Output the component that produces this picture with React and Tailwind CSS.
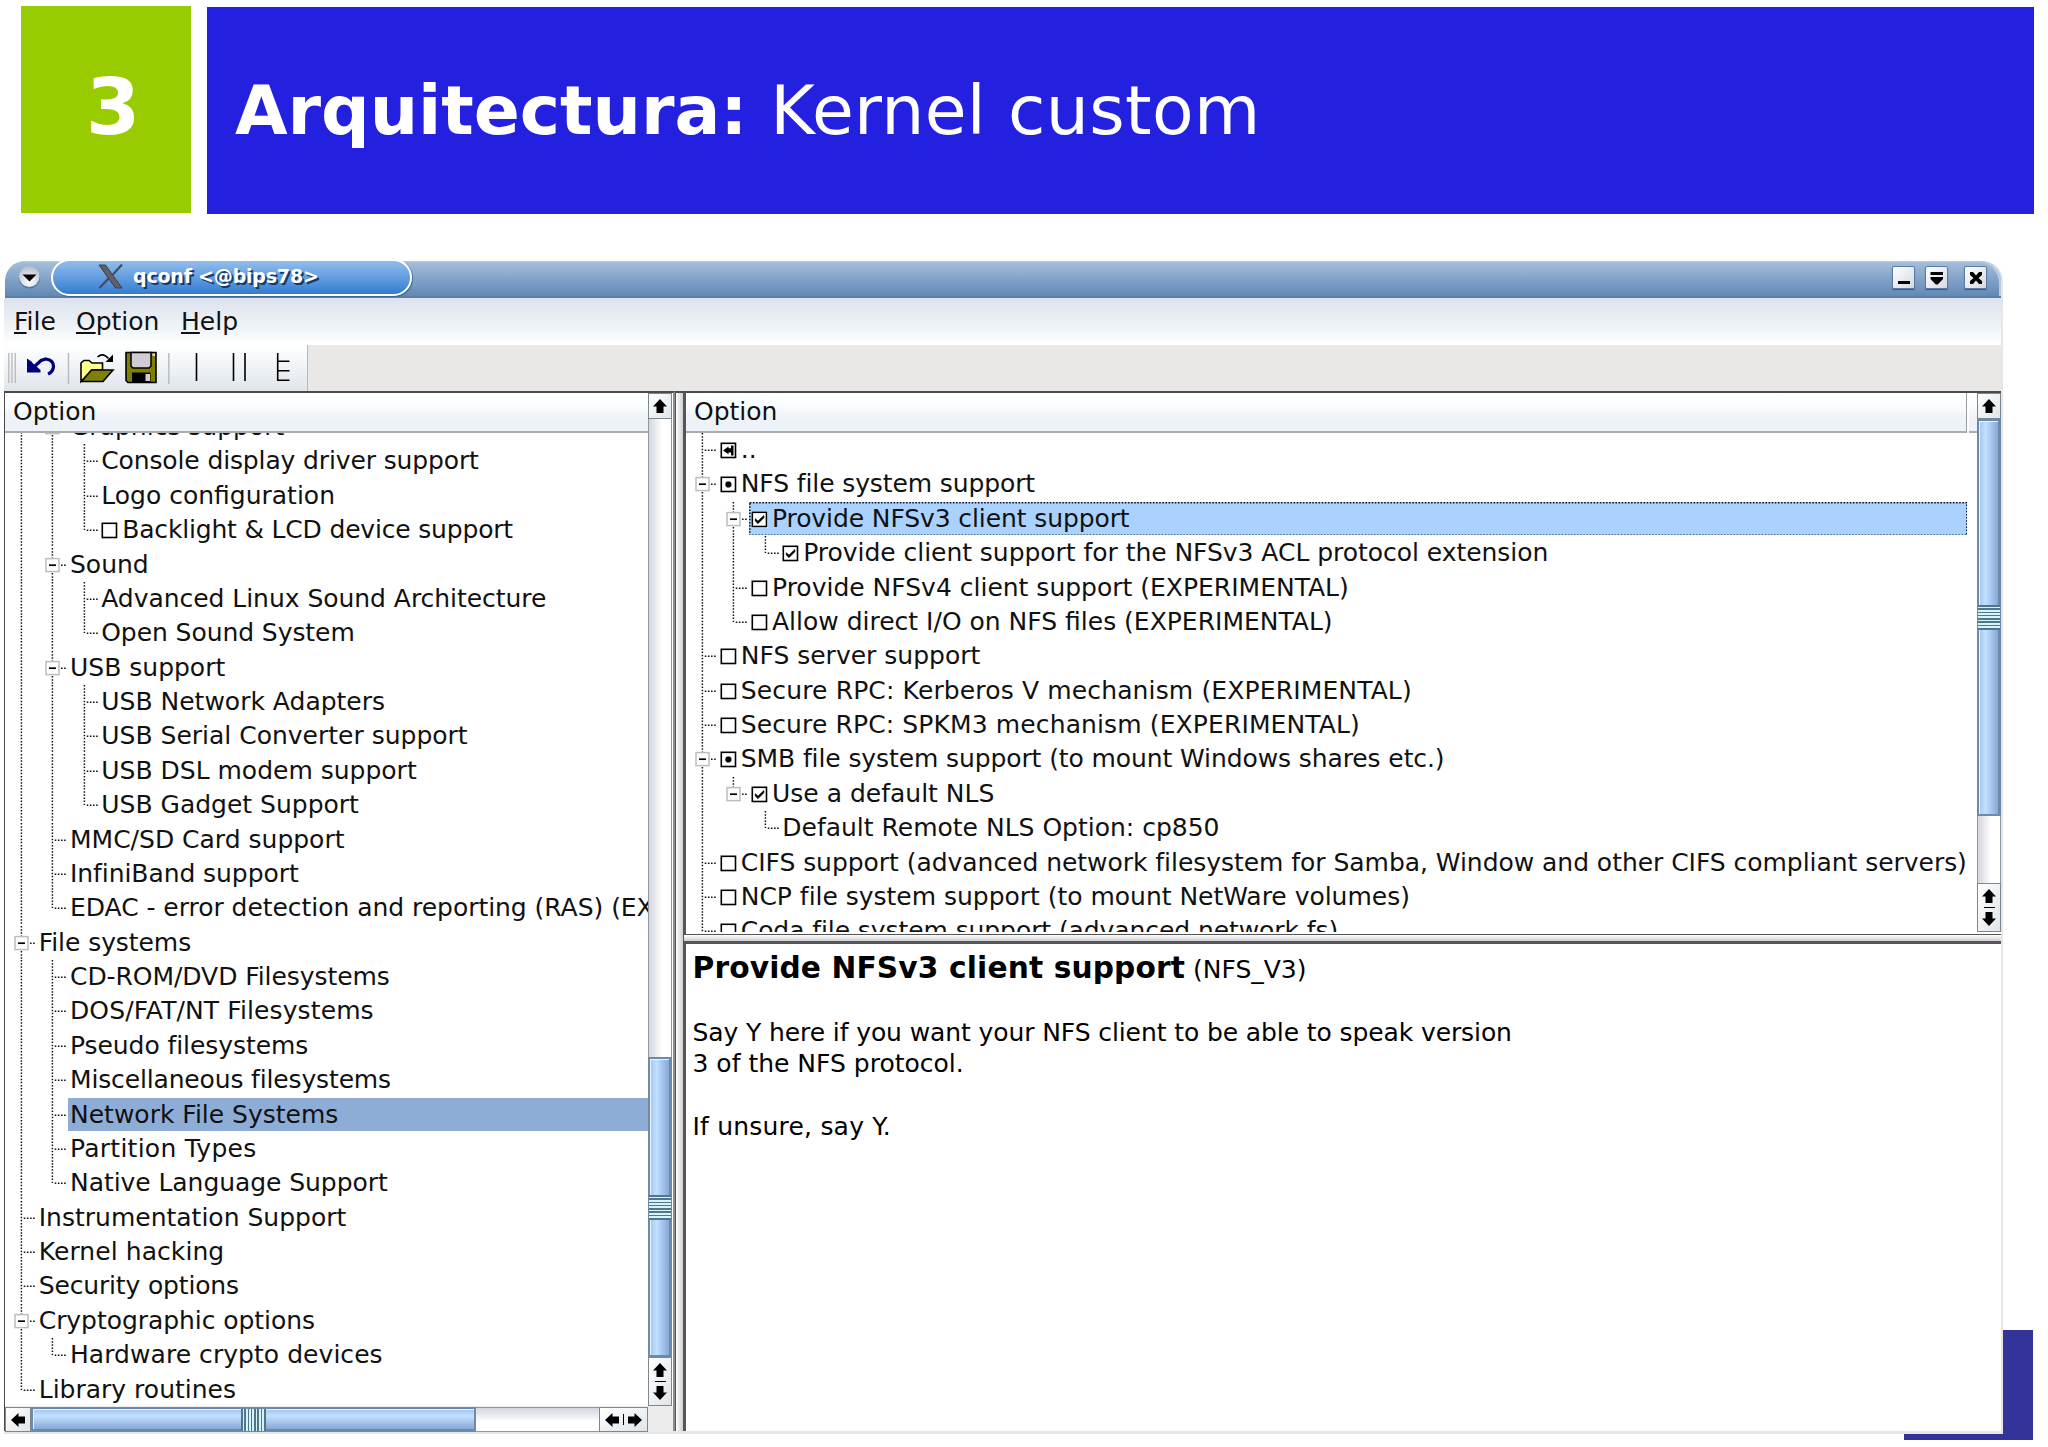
const MENU_ROWS = [
  { guides: "|+", label: "Graphics support" },
  { guides: "||t", label: "Console display driver support", fit: "tracking-[-0.13px]" },
  { guides: "||t", label: "Logo configuration" },
  { guides: "||l", label: "Backlight & LCD device support", box: "empty", fit: "tracking-[-0.18px]" },
  { guides: "|+", label: "Sound" },
  { guides: "||t", label: "Advanced Linux Sound Architecture", fit: "tracking-[-0.04px]" },
  { guides: "||l", label: "Open Sound System", fit: "tracking-[-0.07px]" },
  { guides: "|+", label: "USB support" },
  { guides: "||t", label: "USB Network Adapters" },
  { guides: "||t", label: "USB Serial Converter support" },
  { guides: "||t", label: "USB DSL modem support" },
  { guides: "||l", label: "USB Gadget Support" },
  { guides: "|t", label: "MMC/SD Card support" },
  { guides: "|t", label: "InfiniBand support", fit: "tracking-[-0.07px]" },
  { guides: "|l", label: "EDAC - error detection and reporting (RAS) (EXPERIMENTAL)", fit: "tracking-[-0.04px]" },
  { guides: "+", label: "File systems", fit: "tracking-[-0.07px]" },
  { guides: "|t", label: "CD-ROM/DVD Filesystems", fit: "tracking-[-0.06px]" },
  { guides: "|t", label: "DOS/FAT/NT Filesystems", fit: "tracking-[0.11px]" },
  { guides: "|t", label: "Pseudo filesystems", fit: "tracking-[-0.07px]" },
  { guides: "|t", label: "Miscellaneous filesystems", fit: "tracking-[-0.15px]" },
  { guides: "|t", label: "Network File Systems", state: "selected" },
  { guides: "|t", label: "Partition Types", fit: "tracking-[0.26px]" },
  { guides: "|l", label: "Native Language Support", fit: "tracking-[-0.06px]" },
  { guides: "t", label: "Instrumentation Support" },
  { guides: "t", label: "Kernel hacking", fit: "tracking-[0.07px]" },
  { guides: "t", label: "Security options", fit: "tracking-[-0.16px]" },
  { guides: "+", label: "Cryptographic options", fit: "tracking-[-0.06px]" },
  { guides: "|l", label: "Hardware crypto devices", fit: "tracking-[0.05px]" },
  { guides: "l", label: "Library routines" },
]

const CONFIG_ROWS = [
  { guides: "t", label: "..", box: "back" },
  { guides: "+", label: "NFS file system support", box: "module", fit: "tracking-[-0.11px]" },
  { guides: "|+", label: "Provide NFSv3 client support", box: "checked", state: "focused", fit: "tracking-[-0.1px]" },
  { guides: "||l", label: "Provide client support for the NFSv3 ACL protocol extension", box: "checked", fit: "tracking-[-0.04px]" },
  { guides: "|t", label: "Provide NFSv4 client support (EXPERIMENTAL)", box: "empty" },
  { guides: "|l", label: "Allow direct I/O on NFS files (EXPERIMENTAL)", box: "empty" },
  { guides: "t", label: "NFS server support", box: "empty" },
  { guides: "t", label: "Secure RPC: Kerberos V mechanism (EXPERIMENTAL)", box: "empty", fit: "tracking-[0.14px]" },
  { guides: "t", label: "Secure RPC: SPKM3 mechanism (EXPERIMENTAL)", box: "empty", fit: "tracking-[0.12px]" },
  { guides: "+", label: "SMB file system support (to mount Windows shares etc.)", box: "module", fit: "tracking-[-0.1px]" },
  { guides: "|-", label: "Use a default NLS", box: "checked" },
  { guides: "| l", label: "Default Remote NLS Option: cp850" },
  { guides: "t", label: "CIFS support (advanced network filesystem for Samba, Window and other CIFS compliant servers)", box: "empty", fit: "tracking-[-0.04px]" },
  { guides: "t", label: "NCP file system support (to mount NetWare volumes)", box: "empty", fit: "tracking-[-0.02px]" },
  { guides: "t", label: "Coda file system support (advanced network fs)", box: "empty", fit: "tracking-[-0.08px]" },
]

// | line, t branch, l last branch, + expander with siblings below, - last expander
function Guide({ kind }) {
  const expander = kind === "+" || kind === "-"
  const branch = expander || kind === "t" || kind === "l"
  const dots = { stroke: "#111", strokeWidth: 1.5, strokeDasharray: "1.5625 1.5625" }
  return (
    <svg width="31.25" height="34.375" viewBox="0 0 31.25 34.375" className="shrink-0">
      {kind !== " " && <path d={expander ? "M16.4 0V10" : kind === "l" ? "M16.4 0V17" : "M16.4 0V34.375"} {...dots} />}
      {kind === "+" && <path d="M16.4 25V34.375" {...dots} />}
      {branch && <path d={expander ? "M25 17.2H30" : "M18.75 17.2H30"} {...dots} />}
      {expander && (
        <>
          <rect x="10" y="10.6" width="13" height="13" fill="#fff" stroke="#bdbdbd" strokeWidth="1.5" />
          <path d="M13 17.2H20" stroke="#000" strokeWidth="1.7" />
        </>
      )}
    </svg>
  )
}

function Box({ kind }) {
  return (
    <svg width="17" height="17" viewBox="0 0 17 17" className="mt-[9px] mr-[4px] ml-[2.5px] shrink-0 bg-white">
      <rect x="1.3" y="1.3" width="14.2" height="14.2" fill="#fff" stroke="#000" strokeWidth="1.6" />
      {kind === "checked" && <path d="M4.3 7.8V10L7 12.6L12.8 6.8V4.6L7 10.2Z" fill="#000" stroke="#000" strokeWidth="0.8" />}
      {kind === "module" && <path d="M7 5.4H9.8L11.4 7V9.8L9.8 11.4H7L5.4 9.8V7Z" fill="#000" />}
      {kind === "back" && <path d="M3 8.4L8.5 4.6V6.2H11V3.4H13.5V13.4H11V10.6H8.5V12.2Z" fill="#000" />}
    </svg>
  )
}

const ROW_STATE = {
  selected: "bg-[#8eadd6]",
  focused: "bg-[#aad2ff]",
}

// dotted keyboard focus rectangle round the current row
function FocusFrame() {
  return (
    <svg width="100%" height="100%" className="absolute inset-0">
      <rect x="0.8" y="0.8" width="1217" height="32.4" fill="none" stroke="#112" strokeWidth="1.6" strokeDasharray="1.5625 1.5625" />
    </svg>
  )
}

function Tree({ rows, className = "" }) {
  return (
    <div className={className}>
      {rows.map((row) => (
        <div key={row.label} className="flex h-[34.375px]">
          {[...row.guides].map((kind, i) => (
            <Guide key={i} kind={kind} />
          ))}
          <div className={`relative flex h-[33.7px] min-w-0 flex-1 ${ROW_STATE[row.state] || ""}`}>
            {row.state === "focused" && <FocusFrame />}
            {row.box && <Box kind={row.box} />}
            <span className={`whitespace-pre leading-[33px] ${row.fit || ""} ${row.box ? "" : "pl-[2.5px]"}`}>{row.label}</span>
          </div>
        </div>
      ))}
    </div>
  )
}

function ColumnHeader({ children }) {
  return (
    <div className="flex h-[40px] shrink-0 border-b-2 border-[#a9adb1] bg-linear-to-b from-[#eef5f8] via-[#dfe8ef] via-60% to-[#eff3fa]">
      <div className="flex flex-1 bg-linear-to-b from-white via-[#fbfdfe] via-30% to-transparent pl-[8px] leading-[38px]">
        {children}
      </div>
    </div>
  )
}

const ARROWS = {
  up: "M7 0L14 7.5H10.5V14H3.5V7.5H0Z",
  down: "M7 14L14 6.5H10.5V0H3.5V6.5H0Z",
  left: "M0 7L7.5 0V3.5H14V10.5H7.5V14Z",
  right: "M14 7L6.5 0V3.5H0V10.5H6.5V14Z",
}

function Arrow({ dir }) {
  return (
    <svg width="14" height="14" viewBox="0 0 14 14">
      <path d={ARROWS[dir]} fill="#000" />
    </svg>
  )
}

const BUTTON = "flex shrink-0 items-center justify-center border-[1.5px] border-[#7c8790] bg-linear-to-br from-white to-[#dfe5ea]"

function VScroll({ before, thumb, after }) {
  return (
    <div className="flex w-[24px] shrink-0 flex-col">
      <div className={`${BUTTON} h-[26px]`}>
        <Arrow dir="up" />
      </div>
      <div className={`${before} border-x border-[#8f99a5] bg-linear-to-r from-[#d3d6df] to-white to-60%`} />
      <div
        className={`${thumb} flex shrink-0 flex-col justify-center border-2 border-r-[3px] border-[#6f8aa8] bg-linear-to-r from-[#a3c6ee] via-[#c3e0ff] via-35% to-[#86a8d8] shadow-[inset_1px_1px_0_#e6f4ff]`}
      >
        <div className="-mr-[2px] -ml-px h-[25px] bg-[repeating-linear-gradient(to_bottom,#4f7689_0_1.6px,#d8f2fb_1.6px_3.3px)]" />
      </div>
      <div className={`${after} border-x border-[#8f99a5] bg-linear-to-r from-[#d3d6df] to-white to-60%`} />
      <div className={`${BUTTON} h-[49px] flex-col gap-[4px]`}>
        <Arrow dir="up" />
        <div className="h-[1.6px] w-[11px] bg-black" />
        <Arrow dir="down" />
      </div>
    </div>
  )
}

function HScroll() {
  return (
    <div className="flex h-[25px] w-[643px] shrink-0">
      <div className={`${BUTTON} w-[26px]`}>
        <Arrow dir="left" />
      </div>
      <div className="flex w-[445px] shrink-0 justify-center border-2 border-b-[3px] border-[#6f8aa8] bg-linear-to-b from-[#a3c6ee] via-[#c3e0ff] via-35% to-[#86a8d8] shadow-[inset_1px_1px_0_#e6f4ff]">
        <div className="-mb-[2px] w-[25px] bg-[repeating-linear-gradient(to_right,#4f7689_0_1.6px,#d8f2fb_1.6px_3.3px)]" />
      </div>
      <div className="flex-1 border-y border-[#8f99a5] bg-linear-to-b from-[#d3d6df] to-white to-60%" />
      <div className={`${BUTTON} w-[49px] gap-[4px]`}>
        <Arrow dir="left" />
        <div className="h-[11px] w-[1.6px] bg-black" />
        <Arrow dir="right" />
      </div>
    </div>
  )
}

function WindowButton({ children }) {
  return (
    <div className="h-[23px] w-[23px] rounded-[2px] border border-[#5c7ba6] bg-linear-to-br from-white to-[#d4d9e2] shadow-[0_1px_1px_#2f5a8c]">
      <svg width="21" height="21" viewBox="0 0 21 21">
        {children}
      </svg>
    </div>
  )
}

function TitleBar() {
  return (
    <div className="ml-px flex h-[37px] shrink-0 items-start rounded-tl-[20px] rounded-tr-[20px] border-b-2 border-[#5d7da5] bg-linear-to-b from-[#a6bfdc] to-[#6189b6] pl-[14px] shadow-[inset_-3px_2px_0_-1px_#b9cce2]">
      <svg width="22" height="24" viewBox="0 0 22 24" className="mt-[4px] shrink-0">
        <defs>
          <radialGradient id="orb" cx="0.5" cy="0.75" r="0.7">
            <stop offset="0" stopColor="#fff" />
            <stop offset="1" stopColor="#b9c2ce" />
          </radialGradient>
        </defs>
        <circle cx="10.5" cy="13" r="10.5" fill="#4f77a6" />
        <circle cx="10.3" cy="11.6" r="10.3" fill="url(#orb)" />
        <path d="M3.5 9.5H17.5L10.5 16.5Z" fill="#000" />
      </svg>
      <div className="ml-[10px] flex h-[36px] w-[362px] overflow-hidden">
        <div className="-mt-[2px] flex h-[37px] w-[361px] rounded-full border-[2.5px] border-white bg-linear-to-b from-[#92bdec] to-[#2f7cd2] pl-[45px] shadow-[1px_1px_1px_#3a628f]">
          <svg width="26" height="25" viewBox="0 0 26 25" className="mt-[3px]">
            <path d="M1 1H7.5L24 24H17.5Z" fill="#5d6166" stroke="#3c4046" />
            <path d="M24 0.5L14.5 11M11 14L1.5 24" stroke="#4a4e54" strokeWidth="2.2" />
          </svg>
          <span className="ml-[9px] text-[19px] leading-[31px] font-bold tracking-[-0.2px] text-white [text-shadow:2px_2px_0_#163a66]">
            {"qconf <@bips78>"}
          </span>
        </div>
      </div>
      <div className="flex-1" />
      <div className="mt-[5px] mr-[14px] flex">
        <WindowButton>
          <path d="M5 15.5H17" stroke="#000" strokeWidth="3" />
        </WindowButton>
        <div className="w-[10px]" />
        <WindowButton>
          <path d="M4.5 5H17V8H4.5Z M4.5 10H17V12L11.7 17.5H9.8L4.5 12Z" fill="#000" />
        </WindowButton>
        <div className="w-[16px]" />
        <WindowButton>
          <path d="M5 5H8L11 8.5L14 5H17V8L13.5 11L17 14V17H14L11 13.5L8 17H5V14L8.5 11L5 8Z" fill="#000" />
        </WindowButton>
      </div>
    </div>
  )
}

function MenuItem({ label, className }) {
  return (
    <span className={className}>
      <span className="underline decoration-[1.6px] underline-offset-[2px]">{label[0]}</span>
      {label.slice(1)}
    </span>
  )
}

function ToolBar() {
  return (
    <div className="flex h-[46px] shrink-0 bg-[#e9e8e7]">
      <div className="flex w-[304px] border-r-[1.5px] border-[#b5b7ba] bg-linear-to-b from-white via-[#f3f6f8] via-40% to-[#dfe5ea]">
        <svg width="302" height="46" viewBox="4 345 302 46">
          <path d="M8.8 353V383M12 353V383M15.3 353V383" stroke="#b9bcc0" strokeWidth="1.4" />
          <path d="M68.5 353V384M168.8 353V384" stroke="#b9bcc0" strokeWidth="1.5" />
          {/* undo */}
          <path d="M27 358.5L31.5 361.5L33 363.5L36 366L40.5 370V372.5H27Z" fill="#00007c" />
          <path d="M34 367L41 360.5L46 359Q53.5 360 53.5 366.5Q53 372 48 374" fill="none" stroke="#00007c" strokeWidth="3.2" />
          {/* open */}
          <path d="M81 381.5V363L84 360.5H89L92 363H102.5V370H92L81 381.5Z" fill="#ffff8c" stroke="#000" strokeWidth="1.6" />
          <path d="M81.5 381.5L91.5 370H113L103 381.5Z" fill="#808000" stroke="#000" strokeWidth="1.6" />
          <path d="M97.5 357Q103 352 108.5 358.5" fill="none" stroke="#000" strokeWidth="1.6" />
          <path d="M113 354.5V362H105.5Z" fill="#000" />
          {/* save */}
          <path d="M126 352.5H156V382.5H128L126 380.5Z" fill="#808000" stroke="#000" strokeWidth="1.6" />
          <path d="M131 352.5H151V366L149 368H133L131 366Z" fill="#d3cbd3" stroke="#000" strokeWidth="1.5" />
          <path d="M152.5 353.5H155V356H152.5Z" fill="#ddd" />
          <path d="M132 372.5H150.5V382H132Z" fill="#000" />
          <path d="M145.5 374H150V381H145.5Z" fill="#d3cbd3" />
          {/* single, split and full view */}
          <path d="M196.5 353V381M233.5 353V381M245 353V381" stroke="#000" strokeWidth="1.6" />
          <path d="M277.7 353V380.3H289.5M277.7 361.3H289.5M277.7 370.8H289.5" fill="none" stroke="#000" strokeWidth="1.6" />
        </svg>
      </div>
    </div>
  )
}

function QconfWindow() {
  return (
    <div className="relative flex h-[1173px] w-[1999px] flex-col rounded-t-[20px] border-r-2 border-b-[3px] border-[#e6e6e6] bg-white text-[25px] text-[#111]">
      <TitleBar />
      <div className="flex h-[47px] shrink-0 bg-linear-to-b from-[#dde1ed] via-[#eef3f6] via-60% to-white pl-[10px] leading-[47px]">
        <MenuItem label="File" className="w-[62px]" />
        <MenuItem label="Option" className="w-[105px]" />
        <MenuItem label="Help" className="w-[80px]" />
      </div>
      <ToolBar />
      <div className="flex min-h-0 flex-1">
        <div className="flex w-[671px] shrink-0 flex-col border-t-2 border-r-2 border-l border-t-[#4a4a4a] border-r-[#8d8d8d] border-l-[#4a4a4a]">
          <div className="flex h-[1013px]">
            <div className="flex w-[643px] shrink-0 flex-col overflow-hidden">
              <ColumnHeader>Option</ColumnHeader>
              <div className="min-h-0 flex-1 overflow-hidden">
                <Tree rows={MENU_ROWS} className="-mt-[23px]" />
              </div>
            </div>
            <VScroll before="h-[638px]" thumb="h-[300px]" after="h-0" />
          </div>
          <div className="flex bg-[#ececec] pt-px">
            <HScroll />
          </div>
        </div>
        <div className="w-[11px] shrink-0 border-t-2 border-r-[3px] border-l border-t-[#4a4a4a] border-r-[#55555a] border-l-[#555] bg-linear-to-r from-white to-[#cfcfd2]" />
        <div className="flex min-w-0 flex-1 flex-col border-t-2 border-[#4a4a4a]">
          <div className="flex h-[539px] shrink-0">
            <div className="flex w-[1291px] shrink-0 flex-col overflow-hidden">
              <div className="flex">
                <div className="w-[1282px] border-r border-[#9a9ea3]">
                  <ColumnHeader>Option</ColumnHeader>
                </div>
                <div className="flex-1 border-l-2 border-white">
                  <ColumnHeader />
                </div>
              </div>
              <div className="min-h-0 w-[1281px] flex-1 overflow-hidden">
                <Tree rows={CONFIG_ROWS} />
              </div>
            </div>
            <VScroll before="h-0" thumb="h-[397px]" after="h-[67px]" />
          </div>
          <div className="mt-[2px] -ml-[2px] h-[10px] shrink-0 border-t border-b-[3px] border-t-[#555] border-b-[#55555a] bg-linear-to-b from-white to-[#cfcfd2]" />
          <div className="pl-[6.5px] leading-[31.25px] text-black">
            <p className="pt-[8px] leading-[32px]">
              <b className="text-[29.7px] tracking-[0.12px]">Provide NFSv3 client support</b> (NFS_V3)
            </p>
            <p className="pt-[31px] tracking-[-0.1px]">
              Say Y here if you want your NFS client to be able to speak version
              <br />
              <span className="tracking-normal">3 of the NFS protocol.</span>
            </p>
            <p className="pt-[31px] tracking-[0.2px]">If unsure, say Y.</p>
          </div>
        </div>
      </div>
    </div>
  )
}

export default function App() {
  return (
    <div className="relative h-[1447px] w-[2048px] overflow-hidden bg-white font-['DejaVu_Sans',sans-serif]">
      <div className="flex h-[261px] items-start gap-[16px] pt-[6px] pl-[21px] text-white">
        <div className="h-[207px] w-[170px] bg-[#99cc00] pl-[65px] text-[78px] leading-[202px] font-bold">3</div>
        <div className="mt-px h-[207px] w-[1827px] bg-[#2320df] pl-[28px] text-[68px] leading-[207px] whitespace-pre">
          <b className="tracking-[-0.05px]">Arquitectura:</b>
          <span className="pl-px tracking-[0.35px]"> Kernel custom</span>
        </div>
      </div>
      <div className="absolute top-[1330px] left-[1904px] h-[110px] w-[129px] bg-[#333399]" />
      <div className="pl-[4px]">
        <QconfWindow />
      </div>
    </div>
  )
}
